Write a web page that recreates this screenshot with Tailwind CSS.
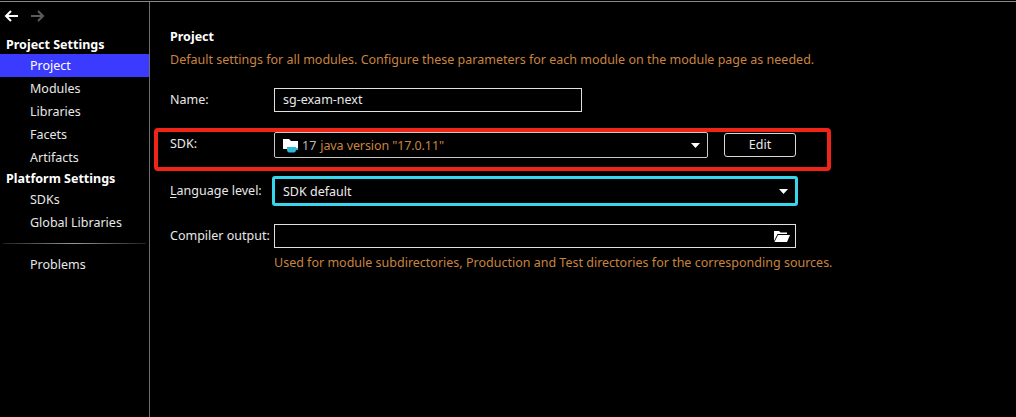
<!DOCTYPE html>
<html lang="en">
<head>
    <meta charset="UTF-8">
    <title>Project Structure</title>
    <script src="https://cdn.jsdelivr.net/npm/@tailwindcss/browser@4"></script>
</head>
<body class="bg-black h-[417px] w-[1016px] overflow-hidden font-['Noto_Sans',sans-serif] text-[12.5px] leading-[18px] text-[#e8e8e8]">
    <div class="h-px mt-px bg-[#8a8a8a]"></div>
    <div class="flex h-[415px]">
        <!-- sidebar -->
        <aside class="w-[149px] shrink-0">
            <div class="flex items-center gap-[11px] pl-[4px] h-[26px] pt-[2px]">
                <svg width="15" height="12" viewBox="0 0 15 12" fill="none" stroke="#fff" stroke-width="2"><path d="M14 6H2M7 1L2 6l5 5"/></svg>
                <svg width="15" height="12" viewBox="0 0 15 12" fill="none" stroke="#5c5c5c" stroke-width="2"><path d="M1 6h12M8 1l5 5-5 5"/></svg>
            </div>
            <div class="h-[25px] pl-[6px] pt-[8px] font-bold text-white leading-[18px]">Project Settings</div>
            <div class="h-[23px] mt-[1px] pl-[30px] leading-[23px] bg-[#3b3bff] text-white">Project</div>
            <div class="h-[23px] pl-[30px] leading-[23px]">Modules</div>
            <div class="h-[23px] pl-[30px] leading-[23px]">Libraries</div>
            <div class="h-[23px] pl-[30px] leading-[23px]">Facets</div>
            <div class="h-[23px] pl-[30px] leading-[23px]">Artifacts</div>
            <div class="h-[19px] pl-[6px] leading-[19px] font-bold text-white">Platform Settings</div>
            <div class="h-[23px] pl-[30px] leading-[23px]">SDKs</div>
            <div class="h-[23px] pl-[30px] leading-[23px]">Global Libraries</div>
            <div class="mx-[3px] my-[9px] h-px bg-gradient-to-r from-[#222] via-[#999] to-[#222]"></div>
            <div class="h-[23px] pl-[30px] leading-[23px]">Problems</div>
        </aside>
        <div class="w-px shrink-0 bg-[#6e6e6e]"></div>

        <!-- project page -->
        <main class="relative flex-1 pl-[20px]">
            <div class="pt-[26px] font-bold text-white leading-[18px]">Project</div>
            <p class="mt-[5px] text-[#c9843f]">Default settings for all modules. Configure these parameters for each module on the module page as needed.</p>

            <div class="mt-[19px] flex items-center h-[24px]">
                <label class="w-[104px] shrink-0">Name:</label>
                <div class="w-[308px] h-[24px] border border-[#e0e0e0] pl-[8px] leading-[22px] text-[#e8e8e8]">sg-exam-next</div>
            </div>

            <div class="mt-[20px] flex items-center h-[26px]">
                <label class="w-[104px] shrink-0 -mt-[2px]">SDK:</label>
                <div class="w-[434px] h-[26px] border border-[#c8c8c8] rounded-[2px] pl-[8px] pr-[7px] flex items-center">
                    <svg width="16" height="15" viewBox="0 0 16 15" class="shrink-0 mr-[3px]">
                        <path d="M0 1h6l2 2h7v8H0z" fill="#fff"/>
                        <path d="M4 9h9v3c0 1.500-1 2.500-2 2.500H6c-1 0-2-1-2-2.500z" fill="#2fb8d8"/>
                        <path d="M13 10h2v2h-2z" fill="#2fb8d8"/>
                    </svg>
                    <span class="text-[#b8b8b8] pt-[2px]">17</span>
                    <span class="ml-[4px] pt-[2px] text-[#c9843f] tracking-[-0.1px]">java version "17.0.11"</span>
                    <svg width="9" height="5" viewBox="0 0 9 5" class="ml-auto" fill="#fff"><path d="M0 0h9L4.500 5z"/></svg>
                </div>
                <button class="ml-[16px] w-[72px] h-[24px] border border-[#d8d8d8] rounded-[3px] text-center leading-[22px] text-[#e8e8e8]">Edit</button>
            </div>

            <div class="mt-[18px] flex items-center h-[30px]">
                <label class="w-[102px] shrink-0"><span class="underline underline-offset-2">L</span>anguage level:</label>
                <div class="w-[526px] h-[30px] border-[3px] border-[#35d6ee] rounded-[3px] pl-[8px] pr-[7px] flex items-center text-[#ececec]">
                    <span class="pt-[2px]">SDK default</span>
                    <svg width="9" height="5" viewBox="0 0 9 5" class="ml-auto" fill="#fff"><path d="M0 0h9L4.500 5z"/></svg>
                </div>
            </div>

            <div class="mt-[18px] flex items-center h-[24px]">
                <label class="w-[104px] shrink-0">Compiler output:</label>
                <div class="w-[522px] h-[24px] border border-[#e0e0e0] flex items-center justify-end pr-[5px]">
                    <svg width="16" height="13" viewBox="0 0 16 13" fill="#fff"><path d="M0 1h5l1.500 1.500H13V4H3.500L0 11z"/><path d="M4 5h12l-3 7H.5z"/></svg>
                </div>
            </div>
            <p class="mt-[6px] ml-[104px] text-[#c9843f]">Used for module subdirectories, Production and Test directories for the corresponding sources.</p>

            <!-- red annotation drawn over the screenshot -->
            <div class="absolute left-[4px] top-[126px] w-[677px] h-[43px] border-[4px] border-[#f02417] rounded-[4px]"></div>
        </main>
    </div>
</body>
</html>
